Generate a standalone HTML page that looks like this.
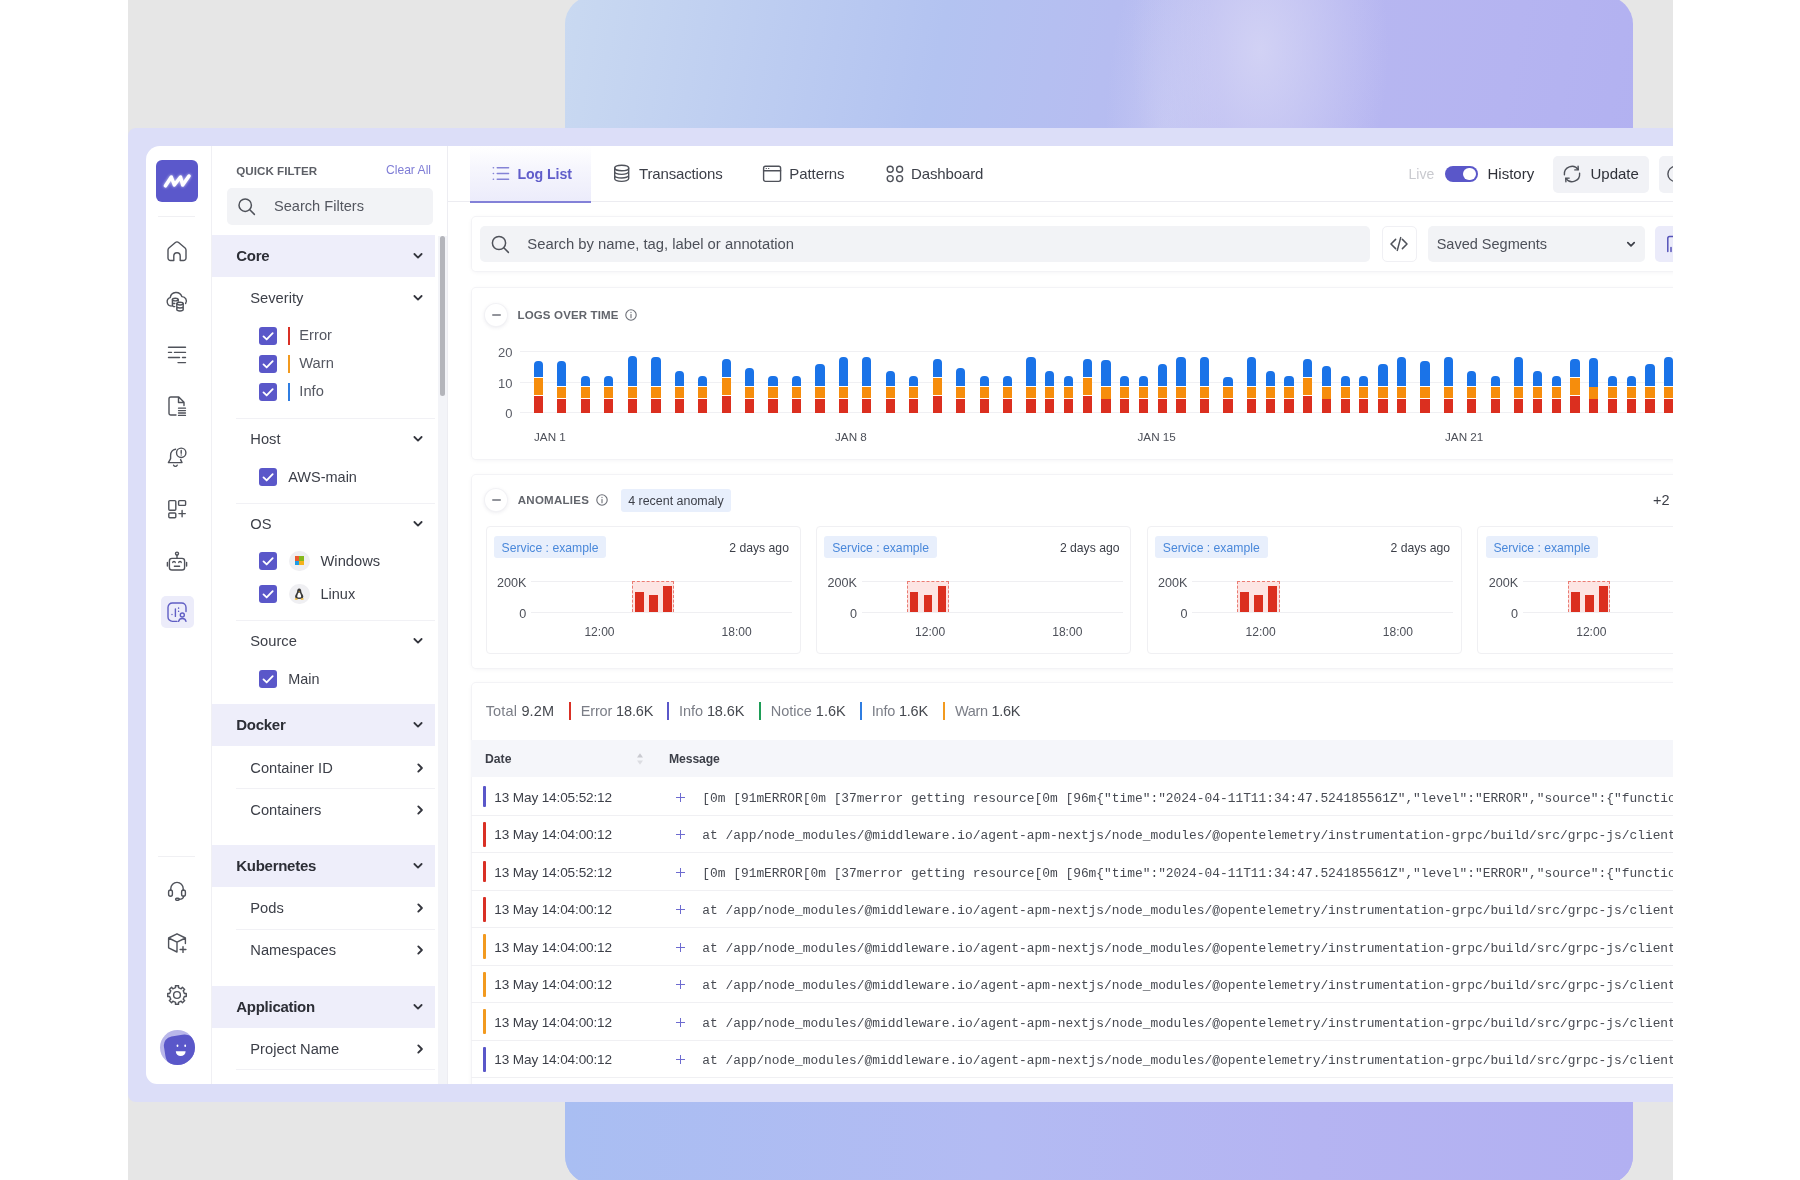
<!DOCTYPE html>
<html lang="en">
<head>
<meta charset="utf-8">
<title>Logs</title>
<style>
*{box-sizing:border-box;margin:0;padding:0}
html,body{width:1800px;height:1180px;overflow:hidden;background:#fff}
body{font-family:"Liberation Sans",sans-serif;color:#3a3d46;position:relative}
#stage{position:absolute;left:128px;top:0;width:1545px;height:1180px;background:#e6e6e6;overflow:hidden}
#grad{position:absolute;left:437px;top:-4px;width:1068px;height:1188px;border-radius:28px;overflow:hidden;
 background:linear-gradient(100deg,#c9d9f1 0%,#b3c3f1 30%,#b8b9f1 52%,#b5b4f1 75%,#afaef1 100%)}
#grad i{position:absolute;display:block}
#frame{position:absolute;left:0;top:128px;width:1600px;height:974px;background:#dcdef8;border-radius:8px 0 0 8px}
#app{position:absolute;left:18px;top:146px;width:1600px;height:938px;background:#fff;border-radius:14px 0 0 11px;overflow:hidden}
#in{position:absolute;left:-146px;top:-146px;width:1800px;height:1180px;will-change:transform}
.t{position:absolute;white-space:nowrap;line-height:1}
.b{position:absolute}
svg{position:absolute;overflow:visible}
.ico{stroke:#4f525a;stroke-width:1.4;fill:none;stroke-linecap:round;stroke-linejoin:round}
.card{position:absolute;background:#fff;border-radius:4px 0 0 4px;box-shadow:0 0 0 1px #f3f3f6,0 1px 5px rgba(30,30,60,.06)}
.cb{position:absolute;width:18.200px;height:18.200px;border-radius:3px;background:#5a57c9}
.cb svg{left:0;top:0}
.sec{position:absolute;left:212px;width:226px;height:42px;background:#eeeefa}
.sec .t{left:24px;top:13px;font-size:15px;font-weight:bold;color:#2c2e36}
.sub{position:absolute;left:250px;font-size:15px;color:#3c3f48;white-space:nowrap;line-height:1}
.opt{position:absolute;font-size:15px;color:#4a4d57;white-space:nowrap;line-height:1}
.hr{position:absolute;left:237px;width:201px;height:1px;background:#ececf1}
.mono{font-family:"Liberation Mono",monospace}
</style>
</head>
<body>
<div id="stage">
 <div id="grad">
  <i style="left:540px;top:-56px;width:120px;height:400px;background:radial-gradient(ellipse at center,rgba(205,208,244,.55),rgba(205,208,244,0) 70%)"></i>
  <i style="left:565px;top:-156px;width:260px;height:420px;background:radial-gradient(ellipse at center,rgba(214,214,245,.85),rgba(214,214,245,0) 70%)"></i>
  <i style="left:0;top:1106px;width:1068px;height:82px;background:linear-gradient(90deg,#a9bef2 0%,#b3bbf3 40%,#b5b4f2 70%,#b2b0f2 100%)"></i>
 </div>
 <div id="frame"></div>
 <div id="app"><div id="in">
<div class="b" style="left:211px;top:146px;width:1px;height:940px;background:#f0f0f4;"></div>
<div class="b" style="left:156px;top:160px;width:42px;height:42px;background:#5b58cb;border-radius:6px;"></div>
<svg class="" style="left:156px;top:160px;filter:drop-shadow(0 0 1.500px rgba(255,255,255,.75))" width="42" height="42" viewBox="0 0 42 42"><path d="M9.500 25.800 L15.300 17 L18.300 25 L24.500 17 L26.700 25 L33 16" stroke="#fff" stroke-width="3.500" fill="none" stroke-linecap="round" stroke-linejoin="round"/></svg>
<div class="b" style="left:158px;top:216px;width:37px;height:1px;background:#f0f0f3;"></div>
<div class="b" style="left:158px;top:856px;width:37px;height:1px;background:#f0f0f3;"></div>
<svg class="ico" style="left:165.3px;top:239.4px;" width="24" height="24" viewBox="0 0 24 24"><path d="M3 11 Q3 9.800 3.900 9 L10.400 3.500 Q12 2.200 13.600 3.500 L20.100 9 Q21 9.800 21 11 V19 a2.500 2.500 0 0 1 -2.500 2.500 H15.200 V17 a3.200 3.200 0 0 0 -6.400 0 V21.500 H5.500 A2.500 2.500 0 0 1 3 19 Z"/></svg>
<svg class="ico" style="left:165.3px;top:289.2px;" width="24" height="24" viewBox="0 0 24 24"><path d="M6.3 17 A4.3 4.3 0 0 1 5.2 8.6 A6 6 0 0 1 16.8 7.6 A4.4 4.4 0 0 1 20.6 14.5"/><ellipse cx="10.3" cy="10.6" rx="2.9" ry="1.3"/><path d="M7.4 10.6 V16.6 M13.2 10.6 V12.2 M7.4 13.2 c0 .8 1.2 1.3 2.4 1.3 M7.4 16.3 c0 .8 1.2 1.3 2.4 1.3"/><ellipse cx="15" cy="14.6" rx="3.2" ry="1.4"/><path d="M11.8 14.6 V20.6 c0 1.9 6.4 1.9 6.4 0 V14.6 M11.8 17.6 c0 1.9 6.4 1.9 6.4 0"/></svg>
<svg class="ico" style="left:165.3px;top:343px;" width="24" height="24" viewBox="0 0 24 24"><path d="M3.5 4.3 H20.5 M3.5 9.4 H6.5 M9.5 9.4 H20.5 M3.5 14.5 H14.5 M17.5 14.5 H20.5 M13 19.6 H20.5"/></svg>
<svg class="ico" style="left:165.3px;top:394px;" width="24" height="24" viewBox="0 0 24 24"><path d="M11 21 H5.8 A1.8 1.8 0 0 1 4 19.2 V4.8 A1.8 1.8 0 0 1 5.8 3 H13.8 L19 8.2 V11.5 M13.5 3.2 V8.5 H18.8"/><path d="M13.5 14.2 H20.5 M13.5 16.6 H20.5 M13.5 19 H20.5 M13.5 21.4 H20.5" stroke-width="1.3"/></svg>
<svg class="ico" style="left:165.3px;top:445.2px;" width="24" height="24" viewBox="0 0 24 24"><path d="M10.600 4.200 A6 6 0 0 0 5.600 10.200 V13.600 L3.400 17.600 H17 L15.600 14.600"/><path d="M8.6 20.2 a2 2 0 0 0 3.6 0"/><circle cx="16.200" cy="7.800" r="4.700"/><path d="M16.200 5.500 V8.200 M16.200 10 V10.100"/></svg>
<svg class="ico" style="left:165.3px;top:496.7px;" width="24" height="24" viewBox="0 0 24 24"><rect x="3.8" y="3.6" width="7" height="9.6" rx="1"/><rect x="13.6" y="3.6" width="7" height="4.8" rx="1"/><rect x="3.8" y="16" width="7" height="4.8" rx="1"/><path d="M17.100 13.400 V19.800 M13.900 16.600 H20.300"/></svg>
<svg class="ico" style="left:165.3px;top:550px;" width="24" height="24" viewBox="0 0 24 24"><rect x="4.4" y="8.4" width="15.2" height="11.6" rx="2.6"/><path d="M12 8.2 V5.2"/><circle cx="12" cy="3.6" r="1.5"/><path d="M2.4 12.4 V16 M21.6 12.4 V16 M9.4 16.2 H14.6 M7.8 12.6 a1.2 1.2 0 0 1 2.4 0 M13.8 12.6 a1.2 1.2 0 0 1 2.4 0"/></svg>
<div class="b" style="left:161px;top:596px;width:32.5px;height:32px;background:#ececfa;border-radius:5px;"></div>
<svg class="ico" style="left:165.3px;top:600px;stroke:#605ec4;" width="24" height="24" viewBox="0 0 24 24"><path d="M12 21.4 H7.4 A4.4 4.4 0 0 1 3 17 V7.4 A4.4 4.4 0 0 1 7.4 3 H16.6 A4.4 4.4 0 0 1 21 7.4 V11.6"/><path d="M7 14.4 V14.6 M10.4 9 V16.4 M13.6 8 V8.2 M13.6 11.2 V11.4"/><circle cx="17.3" cy="15" r="2"/><path d="M13.6 21.4 a3.8 3.8 0 0 1 7.4 0"/></svg>
<svg class="ico" style="left:165.3px;top:878.3px;" width="24" height="24" viewBox="0 0 24 24"><path d="M5.8 12.4 V10.6 A6.2 6.2 0 0 1 18.2 10.600 V12.4"/><rect x="3.6" y="12" width="3.8" height="6.2" rx="1.9"/><rect x="16.6" y="12" width="3.800" height="6.2" rx="1.9"/><path d="M18.6 18.2 c0 2 -1.600 3 -4.600 3"/><rect x="10.600" y="20.200" width="3.600" height="2" rx="1" /></svg>
<svg class="ico" style="left:165.3px;top:931.4px;" width="24" height="24" viewBox="0 0 24 24"><path d="M12 2.800 L20.400 7 L12 11.200 L3.600 7 Z M3.600 7 V16.800 L12 21 V11.200 M20.400 7 V12.600"/><path d="M18 15.600 V21.400 M15.100 18.500 H20.900"/></svg>
<svg class="ico" style="left:165.3px;top:983px;" width="24" height="24" viewBox="0 0 24 24"><path d="M10.41 2.74 L13.59 2.74 L13.44 4.64 L16.19 5.78 L17.43 4.32 L19.68 6.57 L18.22 7.81 L19.36 10.56 L21.26 10.41 L21.26 13.59 L19.36 13.44 L18.22 16.19 L19.68 17.43 L17.43 19.68 L16.19 18.22 L13.44 19.36 L13.59 21.26 L10.41 21.26 L10.56 19.36 L7.81 18.22 L6.57 19.68 L4.32 17.43 L5.78 16.19 L4.64 13.44 L2.74 13.59 L2.74 10.41 L4.64 10.56 L5.78 7.81 L4.32 6.57 L6.57 4.32 L7.81 5.78 L10.56 4.64 Z" stroke-linejoin="round"/><circle cx="12" cy="12" r="3.4"/></svg>
<div class="b" style="left:160px;top:1030px;width:35px;height:35px;border-radius:50%;background:#b9b7ea;overflow:hidden"><div style="position:absolute;left:5px;top:5px;width:34px;height:34px;border-radius:9px 14px 16px 16px;background:#5a57c9;transform:rotate(-9deg)"></div></div>
<svg class="" style="left:160px;top:1030px;" width="35" height="35" viewBox="0 0 35 35"><ellipse cx="17.500" cy="15.800" rx="0.900" ry="1.300" fill="#fff"/><ellipse cx="25.200" cy="15.800" rx="0.900" ry="1.300" fill="#fff"/><path d="M15.800 21.200 H25.600 A4.900 4.900 0 0 1 15.800 21.200 Z" fill="#fff"/></svg>
<div class="b" style="left:447px;top:146px;width:1px;height:940px;background:#ededf2;"></div>
<div class="b" style="left:438px;top:236px;width:9px;height:850px;background:#f3f4f8;"></div>
<div class="b" style="left:440px;top:236px;width:5px;height:160px;background:#b4b5bb;border-radius:2.5px;"></div>
<div class="t" style="left:236.3px;top:164.50px;font-size:11.6px;color:#5c5f66;font-weight:bold;letter-spacing:0.04px;">QUICK FILTER</div>
<div class="t" style="left:386px;top:164.05px;font-size:12.1px;color:#7f7dd6;">Clear All</div>
<div class="b" style="left:227px;top:188px;width:206px;height:37px;background:#f2f3f6;border-radius:5px;"></div>
<svg class="ico" style="left:237px;top:197px;stroke-width:1.5" width="20" height="20" viewBox="0 0 20 20"><circle cx="8.2" cy="8.2" r="6.2"/><path d="M12.800 12.800 L17.400 17.400"/></svg>
<div class="t" style="left:274px;top:199.30px;font-size:14.6px;color:#53565f;">Search Filters</div>
<div class="b" style="left:212px;top:235.3px;width:222.5px;height:41.7px;background:#eeeefa;"></div>
<div class="t" style="left:236.3px;top:248.00px;font-size:15px;color:#2c2e36;font-weight:bold;letter-spacing:-0.28px;">Core</div>
<svg class="ico" style="left:412.3px;top:252.15000000000003px;stroke:#33353d;stroke-width:1.800" width="12" height="8" viewBox="0 0 12 8"><path d="M2.400 2 L6 5.600 L9.600 2"/></svg>
<div class="t" style="left:250.3px;top:290.95px;font-size:14.7px;color:#3c3f48;">Severity</div>
<svg class="ico" style="left:412.3px;top:293.8px;stroke:#33353d;stroke-width:1.800" width="12" height="8" viewBox="0 0 12 8"><path d="M2.400 2 L6 5.600 L9.600 2"/></svg>
<div class="cb" style="left:259.3px;top:327.0px"><svg width="18.200" height="18.200" viewBox="0 0 19 19"><path d="M4.700 9.800 L8 13 L14.300 6.400" stroke="#fff" stroke-width="1.900" fill="none" stroke-linecap="round" stroke-linejoin="round"/></svg></div>
<div class="b" style="left:287.6px;top:326.8px;width:2px;height:18.5px;background:#d93025;"></div>
<div class="t" style="left:299.3px;top:328.35px;font-size:14.7px;color:#555862;">Error</div>
<div class="cb" style="left:259.3px;top:355.0px"><svg width="18.200" height="18.200" viewBox="0 0 19 19"><path d="M4.700 9.800 L8 13 L14.300 6.400" stroke="#fff" stroke-width="1.900" fill="none" stroke-linecap="round" stroke-linejoin="round"/></svg></div>
<div class="b" style="left:287.6px;top:354.8px;width:2px;height:18.5px;background:#f29a1f;"></div>
<div class="t" style="left:299.3px;top:356.35px;font-size:14.7px;color:#555862;">Warn</div>
<div class="cb" style="left:259.3px;top:383.0px"><svg width="18.200" height="18.200" viewBox="0 0 19 19"><path d="M4.700 9.800 L8 13 L14.300 6.400" stroke="#fff" stroke-width="1.900" fill="none" stroke-linecap="round" stroke-linejoin="round"/></svg></div>
<div class="b" style="left:287.6px;top:382.8px;width:2px;height:18.5px;background:#2f7de1;"></div>
<div class="t" style="left:299.3px;top:384.35px;font-size:14.7px;color:#555862;">Info</div>
<div class="b" style="left:236px;top:418px;width:198.5px;height:1px;background:#f1f1f5;"></div>
<div class="t" style="left:250.3px;top:432.15px;font-size:14.7px;color:#3c3f48;">Host</div>
<svg class="ico" style="left:412.3px;top:435px;stroke:#33353d;stroke-width:1.800" width="12" height="8" viewBox="0 0 12 8"><path d="M2.400 2 L6 5.600 L9.600 2"/></svg>
<div class="cb" style="left:259.3px;top:467.59999999999997px"><svg width="18.200" height="18.200" viewBox="0 0 19 19"><path d="M4.700 9.800 L8 13 L14.300 6.400" stroke="#fff" stroke-width="1.900" fill="none" stroke-linecap="round" stroke-linejoin="round"/></svg></div>
<div class="t" style="left:288.2px;top:469.55px;font-size:14.5px;color:#3c3f48;">AWS-main</div>
<div class="b" style="left:236px;top:502.5px;width:198.5px;height:1px;background:#f1f1f5;"></div>
<div class="t" style="left:250.3px;top:516.65px;font-size:14.7px;color:#3c3f48;">OS</div>
<svg class="ico" style="left:412.3px;top:519.5px;stroke:#33353d;stroke-width:1.800" width="12" height="8" viewBox="0 0 12 8"><path d="M2.400 2 L6 5.600 L9.600 2"/></svg>
<div class="cb" style="left:259.3px;top:552.2px"><svg width="18.200" height="18.200" viewBox="0 0 19 19"><path d="M4.700 9.800 L8 13 L14.300 6.400" stroke="#fff" stroke-width="1.900" fill="none" stroke-linecap="round" stroke-linejoin="round"/></svg></div>
<div class="t" style="left:320.5px;top:554.25px;font-size:14.7px;color:#3c3f48;">Windows</div>
<div class="cb" style="left:259.3px;top:585.0px"><svg width="18.200" height="18.200" viewBox="0 0 19 19"><path d="M4.700 9.800 L8 13 L14.300 6.400" stroke="#fff" stroke-width="1.900" fill="none" stroke-linecap="round" stroke-linejoin="round"/></svg></div>
<div class="t" style="left:320.5px;top:587.15px;font-size:14.5px;color:#3c3f48;">Linux</div>
<div class="b" style="left:289px;top:550.5px;width:20.5px;height:20.5px;background:#efeff2;border-radius:11px;"></div>
<div class="b" style="left:294.6px;top:556.2px;width:4.6px;height:4.6px;background:#ea5a2e;"></div>
<div class="b" style="left:299.2px;top:556.2px;width:4.6px;height:4.6px;background:#86b81c;"></div>
<div class="b" style="left:294.6px;top:560.8px;width:4.6px;height:4.6px;background:#1e9de6;"></div>
<div class="b" style="left:299.2px;top:560.8px;width:4.6px;height:4.6px;background:#f5b21a;"></div>
<div class="b" style="left:289px;top:583.5px;width:20.5px;height:20.5px;background:#efeff2;border-radius:11px;"></div>
<svg class="" style="left:289px;top:583.5px;" width="20.5" height="20.5" viewBox="0 0 20.5 20.5"><path d="M10.200 4.600 c1.600 0 2 1.400 2.100 2.800 c.1 1.600 2 3 2 5.200 c0 1.400 -1 2.400 -4.100 2.400 s-4.100 -1 -4.100 -2.400 c0 -2.200 1.900 -3.600 2 -5.200 c.1 -1.400 .5 -2.800 2.100 -2.800 Z" fill="#3a3a3a" stroke="none"/><path d="M10.200 8.400 c1 0 1.400 1.600 1.800 3 c.3 1 .4 2.200 -1.800 2.200 s-2.100 -1.200 -1.800 -2.200 c.4 -1.400 .8 -3 1.800 -3 Z" fill="#fff" stroke="none"/><path d="M6 14.200 l2.400 .3 l.2 1.300 l-2.800 -.2 Z M14.400 14.200 l-2.400 .3 l-.2 1.300 l2.800 -.2 Z M9.400 7.600 l.8 .6 l.8 -.6 l-.8 -.4 Z" fill="#f2b21c" stroke="none"/></svg>
<div class="b" style="left:236px;top:620px;width:198.5px;height:1px;background:#f1f1f5;"></div>
<div class="t" style="left:250.3px;top:633.65px;font-size:14.7px;color:#3c3f48;">Source</div>
<svg class="ico" style="left:412.3px;top:636.5px;stroke:#33353d;stroke-width:1.800" width="12" height="8" viewBox="0 0 12 8"><path d="M2.400 2 L6 5.600 L9.600 2"/></svg>
<div class="cb" style="left:259.3px;top:669.6px"><svg width="18.200" height="18.200" viewBox="0 0 19 19"><path d="M4.700 9.800 L8 13 L14.300 6.400" stroke="#fff" stroke-width="1.900" fill="none" stroke-linecap="round" stroke-linejoin="round"/></svg></div>
<div class="t" style="left:288.2px;top:671.60px;font-size:14.4px;color:#3c3f48;">Main</div>
<div class="b" style="left:212px;top:704px;width:222.5px;height:41.7px;background:#eeeefa;"></div>
<div class="t" style="left:236.3px;top:716.70px;font-size:15px;color:#2c2e36;font-weight:bold;letter-spacing:-0.28px;">Docker</div>
<svg class="ico" style="left:412.3px;top:720.85px;stroke:#33353d;stroke-width:1.800" width="12" height="8" viewBox="0 0 12 8"><path d="M2.400 2 L6 5.600 L9.600 2"/></svg>
<div class="t" style="left:250.3px;top:760.65px;font-size:14.7px;color:#3c3f48;">Container ID</div>
<svg class="ico" style="left:416.2px;top:761.5px;stroke:#33353d;stroke-width:1.900" width="8" height="12" viewBox="0 0 8 12"><path d="M2.300 2.400 L5.900 6 L2.300 9.600"/></svg>
<div class="b" style="left:236px;top:787.8px;width:198.5px;height:1px;background:#f1f1f5;"></div>
<div class="t" style="left:250.3px;top:802.65px;font-size:14.7px;color:#3c3f48;">Containers</div>
<svg class="ico" style="left:416.2px;top:803.5px;stroke:#33353d;stroke-width:1.900" width="8" height="12" viewBox="0 0 8 12"><path d="M2.300 2.400 L5.900 6 L2.300 9.600"/></svg>
<div class="b" style="left:212px;top:845px;width:222.5px;height:41.7px;background:#eeeefa;"></div>
<div class="t" style="left:236.3px;top:857.70px;font-size:15px;color:#2c2e36;font-weight:bold;letter-spacing:-0.28px;">Kubernetes</div>
<svg class="ico" style="left:412.3px;top:861.85px;stroke:#33353d;stroke-width:1.800" width="12" height="8" viewBox="0 0 12 8"><path d="M2.400 2 L6 5.600 L9.600 2"/></svg>
<div class="t" style="left:250.3px;top:901.15px;font-size:14.7px;color:#3c3f48;">Pods</div>
<svg class="ico" style="left:416.2px;top:902px;stroke:#33353d;stroke-width:1.900" width="8" height="12" viewBox="0 0 8 12"><path d="M2.300 2.400 L5.900 6 L2.300 9.600"/></svg>
<div class="b" style="left:236px;top:929px;width:198.5px;height:1px;background:#f1f1f5;"></div>
<div class="t" style="left:250.3px;top:943.15px;font-size:14.7px;color:#3c3f48;">Namespaces</div>
<svg class="ico" style="left:416.2px;top:944px;stroke:#33353d;stroke-width:1.900" width="8" height="12" viewBox="0 0 8 12"><path d="M2.300 2.400 L5.900 6 L2.300 9.600"/></svg>
<div class="b" style="left:212px;top:986px;width:222.5px;height:41.7px;background:#eeeefa;"></div>
<div class="t" style="left:236.3px;top:998.70px;font-size:15px;color:#2c2e36;font-weight:bold;letter-spacing:-0.28px;">Application</div>
<svg class="ico" style="left:412.3px;top:1002.85px;stroke:#33353d;stroke-width:1.800" width="12" height="8" viewBox="0 0 12 8"><path d="M2.400 2 L6 5.600 L9.600 2"/></svg>
<div class="t" style="left:250.3px;top:1041.65px;font-size:14.7px;color:#3c3f48;">Project Name</div>
<svg class="ico" style="left:416.2px;top:1042.5px;stroke:#33353d;stroke-width:1.900" width="8" height="12" viewBox="0 0 8 12"><path d="M2.300 2.400 L5.900 6 L2.300 9.600"/></svg>
<div class="b" style="left:236px;top:1069.2px;width:198.5px;height:1px;background:#f1f1f5;"></div>
<div class="b" style="left:448px;top:201px;width:1300px;height:1px;background:#ececf1;"></div>
<div class="b" style="left:470px;top:146px;width:121px;height:56.500px;background:linear-gradient(180deg,#fff 0%,#f6f6fd 40%,#ececfb 100%);border-bottom:2px solid #8381d8"></div>
<svg class="ico" style="left:490px;top:163px;" width="20" height="20" viewBox="0 0 20 20"><path d="M7.200 4.800 H18.600 M7.200 10.500 H18.600 M7.200 16.200 H18.600" stroke="#8583d6" stroke-width="1.400"/><path d="M3.300 4.800 H3.500 M3.300 10.500 H3.500 M3.300 16.200 H3.500" stroke="#8583d6" stroke-width="1.500"/></svg>
<div class="t" style="left:517.5px;top:167.00px;font-size:14.2px;color:#605dca;font-weight:bold;letter-spacing:-0.11px;">Log List</div>
<svg class="ico" style="left:612px;top:163px;" width="20" height="20" viewBox="0 0 20 20"><ellipse cx="9.700" cy="5" rx="7" ry="2.800"/><path d="M2.700 5 V15.600 c0 3.700 14 3.700 14 0 V5 M2.700 8.600 c0 3.700 14 3.700 14 0 M2.700 12.200 c0 3.700 14 3.700 14 0"/></svg>
<div class="t" style="left:639px;top:165.80px;font-size:15px;color:#3c3f48;letter-spacing:-0.15px;">Transactions</div>
<svg class="ico" style="left:762px;top:164px;" width="20" height="20" viewBox="0 0 20 20"><rect x="1.600" y="2.200" width="17" height="15.200" rx="1.800"/><path d="M1.600 6.800 H18.600"/><path d="M4.200 4.500 H4.400 M6.600 4.500 H6.800" stroke-width="1.200"/></svg>
<div class="t" style="left:789.3px;top:165.80px;font-size:15px;color:#3c3f48;letter-spacing:-0.08px;">Patterns</div>
<svg class="ico" style="left:885px;top:164px;" width="20" height="20" viewBox="0 0 20 20"><circle cx="5.200" cy="5.200" r="3"/><circle cx="14.600" cy="5.200" r="3"/><circle cx="5.200" cy="14.600" r="3"/><circle cx="14.600" cy="14.600" r="3"/></svg>
<div class="t" style="left:911px;top:165.80px;font-size:15px;color:#3c3f48;letter-spacing:-0.13px;">Dashboard</div>
<div class="t" style="left:1408.5px;top:166.50px;font-size:14px;color:#c9cacf;">Live</div>
<div class="b" style="left:1444.5px;top:165.5px;width:33.5px;height:16.5px;background:#5a57c9;border-radius:8.5px;"></div>
<div class="b" style="left:1463px;top:167.5px;width:12.5px;height:12.5px;background:#fff;border-radius:6.5px;"></div>
<div class="t" style="left:1487.5px;top:166.00px;font-size:15px;color:#2f3139;">History</div>
<div class="b" style="left:1553px;top:155.5px;width:95.5px;height:37px;background:#f1f2f6;border-radius:5px;"></div>
<svg class="ico" style="left:1561.5px;top:164px;" width="20" height="20" viewBox="0 0 20 20"><path d="M2.400 10.700 A7.600 7.600 0 0 1 16.200 5.600 M17.600 9.300 A7.600 7.600 0 0 1 3.800 14.400"/><path d="M12.800 5.900 L16.300 5.700 L16.100 2.200 M7.200 14.100 L3.700 14.300 L3.900 17.800"/></svg>
<div class="t" style="left:1590.5px;top:166.00px;font-size:15px;color:#2f3139;">Update</div>
<div class="b" style="left:1658.5px;top:155.5px;width:40px;height:37px;background:#f1f2f6;border-radius:5px;"></div>
<svg class="ico" style="left:1666px;top:164px;" width="20" height="20" viewBox="0 0 20 20"><circle cx="9.500" cy="10" r="7.600"/></svg>
<div class="card" style="left:471.500px;top:217px;width:1300px;height:54px"></div>
<div class="b" style="left:480px;top:226px;width:890px;height:36px;background:#f2f3f6;border-radius:5px;"></div>
<svg class="ico" style="left:490px;top:234px;stroke-width:1.500" width="20" height="20" viewBox="0 0 20 20"><circle cx="9" cy="9" r="6.600"/><path d="M13.800 13.800 L18.400 18.400"/></svg>
<div class="t" style="left:527.3px;top:236.89px;font-size:14.82px;color:#4d5059;">Search by name, tag, label or annotation</div>
<div class="b" style="left:1381.5px;top:226px;width:35.5px;height:36px;border:1px solid #f0f0f4;border-radius:5px;background:#fff"></div>
<svg class="ico" style="left:1389px;top:234px;stroke-width:1.500" width="20" height="20" viewBox="0 0 20 20"><path d="M6.600 5.400 L2 10 L6.600 14.600 M13.400 5.400 L18 10 L13.400 14.600 M11.700 3.600 L8.300 16.400"/></svg>
<div class="b" style="left:1427.5px;top:226px;width:217.5px;height:36px;background:#f2f3f6;border-radius:5px;"></div>
<div class="t" style="left:1436.7px;top:237.05px;font-size:14.5px;color:#4d5059;">Saved Segments</div>
<svg class="ico" style="left:1626px;top:241.3px;stroke:#3c3f48;stroke-width:1.700" width="10" height="7" viewBox="0 0 10 7"><path d="M1.800 1.700 L5 4.900 L8.200 1.700"/></svg>
<div class="b" style="left:1655px;top:226px;width:40px;height:36px;background:#ebebfa;border-radius:5px;"></div>
<svg class="ico" style="left:1664px;top:234px;stroke:#5552b8;stroke-width:1.500" width="20" height="20" viewBox="0 0 20 20"><path d="M3.800 17.400 V4.400 A1.800 1.800 0 0 1 5.600 2.600 H14 M7 17.400 V13.600"/></svg>
<div class="card" style="left:471.500px;top:288px;width:1300px;height:171px"></div>
<div class="b" style="left:485px;top:303.5px;width:22px;height:22px;border-radius:50%;background:#fff;box-shadow:0 0 0 1px #f2f2f5,0 1px 4px rgba(40,40,80,.13)"></div>
<div class="b" style="left:491.5px;top:314px;width:9px;height:2px;background:#92949b;border-radius:1px;"></div>
<div class="t" style="left:517.5px;top:309.75px;font-size:11.5px;color:#62656c;font-weight:bold;letter-spacing:0.15px;">LOGS OVER TIME</div>
<svg class="ico" style="left:625px;top:308.5px;stroke:#6b6e76;stroke-width:1.100" width="12" height="12" viewBox="0 0 12 12"><circle cx="6" cy="6" r="5.200"/><path d="M6 5.400 V8.700 M6 3.300 V3.400"/></svg>
<div class="b" style="left:520px;top:351.3px;width:1300px;height:1px;background:#f0f0f3;"></div>
<div class="t" style="left:462px;width:50.500px;text-align:right;top:346.3px;font-size:13px;color:#5a5d66">20</div>
<div class="b" style="left:520px;top:381.8px;width:1300px;height:1px;background:#f0f0f3;"></div>
<div class="t" style="left:462px;width:50.500px;text-align:right;top:376.8px;font-size:13px;color:#5a5d66">10</div>
<div class="b" style="left:520px;top:412.3px;width:1300px;height:1px;background:#f0f0f3;"></div>
<div class="t" style="left:462px;width:50.500px;text-align:right;top:407.3px;font-size:13px;color:#5a5d66">0</div>
<div class="b" style="left:533.7px;top:361.3px;width:9.3px;height:15.3px;background:#1a73e8;border-radius:4px 4px 0 0"></div>
<div class="b" style="left:533.7px;top:378.3px;width:9.3px;height:16.3px;background:#f68d0c"></div>
<div class="b" style="left:533.7px;top:396.3px;width:9.3px;height:16.5px;background:#db2f1f"></div>
<div class="b" style="left:557.0px;top:361.3px;width:9.3px;height:24.5px;background:#1a73e8;border-radius:4px 4px 0 0"></div>
<div class="b" style="left:557.0px;top:387.2px;width:9.3px;height:10.7px;background:#f68d0c"></div>
<div class="b" style="left:557.0px;top:399.2px;width:9.3px;height:13.6px;background:#db2f1f"></div>
<div class="b" style="left:580.8px;top:375.5px;width:9.3px;height:10.3px;background:#1a73e8;border-radius:4px 4px 0 0"></div>
<div class="b" style="left:580.8px;top:387.2px;width:9.3px;height:10.7px;background:#f68d0c"></div>
<div class="b" style="left:580.8px;top:399.2px;width:9.3px;height:13.6px;background:#db2f1f"></div>
<div class="b" style="left:604.2px;top:375.5px;width:9.3px;height:10.3px;background:#1a73e8;border-radius:4px 4px 0 0"></div>
<div class="b" style="left:604.2px;top:387.2px;width:9.3px;height:10.7px;background:#f68d0c"></div>
<div class="b" style="left:604.2px;top:399.2px;width:9.3px;height:13.6px;background:#db2f1f"></div>
<div class="b" style="left:627.7px;top:355.5px;width:9.3px;height:30.3px;background:#1a73e8;border-radius:4px 4px 0 0"></div>
<div class="b" style="left:627.7px;top:387.2px;width:9.3px;height:10.7px;background:#f68d0c"></div>
<div class="b" style="left:627.7px;top:399.2px;width:9.3px;height:13.6px;background:#db2f1f"></div>
<div class="b" style="left:651.3px;top:356.7px;width:9.3px;height:29.2px;background:#1a73e8;border-radius:4px 4px 0 0"></div>
<div class="b" style="left:651.3px;top:387.2px;width:9.3px;height:10.7px;background:#f68d0c"></div>
<div class="b" style="left:651.3px;top:399.2px;width:9.3px;height:13.6px;background:#db2f1f"></div>
<div class="b" style="left:674.7px;top:370.8px;width:9.3px;height:15.0px;background:#1a73e8;border-radius:4px 4px 0 0"></div>
<div class="b" style="left:674.7px;top:387.2px;width:9.3px;height:10.7px;background:#f68d0c"></div>
<div class="b" style="left:674.7px;top:399.2px;width:9.3px;height:13.6px;background:#db2f1f"></div>
<div class="b" style="left:698.0px;top:375.5px;width:9.3px;height:10.3px;background:#1a73e8;border-radius:4px 4px 0 0"></div>
<div class="b" style="left:698.0px;top:387.2px;width:9.3px;height:10.7px;background:#f68d0c"></div>
<div class="b" style="left:698.0px;top:399.2px;width:9.3px;height:13.6px;background:#db2f1f"></div>
<div class="b" style="left:721.7px;top:359.2px;width:9.3px;height:17.5px;background:#1a73e8;border-radius:4px 4px 0 0"></div>
<div class="b" style="left:721.7px;top:378.3px;width:9.3px;height:16.3px;background:#f68d0c"></div>
<div class="b" style="left:721.7px;top:396.3px;width:9.3px;height:16.5px;background:#db2f1f"></div>
<div class="b" style="left:745.0px;top:368.3px;width:9.3px;height:17.5px;background:#1a73e8;border-radius:4px 4px 0 0"></div>
<div class="b" style="left:745.0px;top:387.2px;width:9.3px;height:10.7px;background:#f68d0c"></div>
<div class="b" style="left:745.0px;top:399.2px;width:9.3px;height:13.6px;background:#db2f1f"></div>
<div class="b" style="left:768.3px;top:375.5px;width:9.3px;height:10.3px;background:#1a73e8;border-radius:4px 4px 0 0"></div>
<div class="b" style="left:768.3px;top:387.2px;width:9.3px;height:10.7px;background:#f68d0c"></div>
<div class="b" style="left:768.3px;top:399.2px;width:9.3px;height:13.6px;background:#db2f1f"></div>
<div class="b" style="left:792.0px;top:375.5px;width:9.3px;height:10.3px;background:#1a73e8;border-radius:4px 4px 0 0"></div>
<div class="b" style="left:792.0px;top:387.2px;width:9.3px;height:10.7px;background:#f68d0c"></div>
<div class="b" style="left:792.0px;top:399.2px;width:9.3px;height:13.6px;background:#db2f1f"></div>
<div class="b" style="left:815.3px;top:363.8px;width:9.3px;height:22.0px;background:#1a73e8;border-radius:4px 4px 0 0"></div>
<div class="b" style="left:815.3px;top:387.2px;width:9.3px;height:10.7px;background:#f68d0c"></div>
<div class="b" style="left:815.3px;top:399.2px;width:9.3px;height:13.6px;background:#db2f1f"></div>
<div class="b" style="left:838.7px;top:356.7px;width:9.3px;height:29.2px;background:#1a73e8;border-radius:4px 4px 0 0"></div>
<div class="b" style="left:838.7px;top:387.2px;width:9.3px;height:10.7px;background:#f68d0c"></div>
<div class="b" style="left:838.7px;top:399.2px;width:9.3px;height:13.6px;background:#db2f1f"></div>
<div class="b" style="left:862.0px;top:356.7px;width:9.3px;height:29.2px;background:#1a73e8;border-radius:4px 4px 0 0"></div>
<div class="b" style="left:862.0px;top:387.2px;width:9.3px;height:10.7px;background:#f68d0c"></div>
<div class="b" style="left:862.0px;top:399.2px;width:9.3px;height:13.6px;background:#db2f1f"></div>
<div class="b" style="left:885.5px;top:370.8px;width:9.3px;height:15.0px;background:#1a73e8;border-radius:4px 4px 0 0"></div>
<div class="b" style="left:885.5px;top:387.2px;width:9.3px;height:10.7px;background:#f68d0c"></div>
<div class="b" style="left:885.5px;top:399.2px;width:9.3px;height:13.6px;background:#db2f1f"></div>
<div class="b" style="left:909.0px;top:375.5px;width:9.3px;height:10.3px;background:#1a73e8;border-radius:4px 4px 0 0"></div>
<div class="b" style="left:909.0px;top:387.2px;width:9.3px;height:10.7px;background:#f68d0c"></div>
<div class="b" style="left:909.0px;top:399.2px;width:9.3px;height:13.6px;background:#db2f1f"></div>
<div class="b" style="left:932.5px;top:359.2px;width:9.3px;height:17.5px;background:#1a73e8;border-radius:4px 4px 0 0"></div>
<div class="b" style="left:932.5px;top:378.3px;width:9.3px;height:16.3px;background:#f68d0c"></div>
<div class="b" style="left:932.5px;top:396.3px;width:9.3px;height:16.5px;background:#db2f1f"></div>
<div class="b" style="left:956.0px;top:368.3px;width:9.3px;height:17.5px;background:#1a73e8;border-radius:4px 4px 0 0"></div>
<div class="b" style="left:956.0px;top:387.2px;width:9.3px;height:10.7px;background:#f68d0c"></div>
<div class="b" style="left:956.0px;top:399.2px;width:9.3px;height:13.6px;background:#db2f1f"></div>
<div class="b" style="left:979.5px;top:375.5px;width:9.3px;height:10.3px;background:#1a73e8;border-radius:4px 4px 0 0"></div>
<div class="b" style="left:979.5px;top:387.2px;width:9.3px;height:10.7px;background:#f68d0c"></div>
<div class="b" style="left:979.5px;top:399.2px;width:9.3px;height:13.6px;background:#db2f1f"></div>
<div class="b" style="left:1002.8px;top:375.5px;width:9.3px;height:10.3px;background:#1a73e8;border-radius:4px 4px 0 0"></div>
<div class="b" style="left:1002.8px;top:387.2px;width:9.3px;height:10.7px;background:#f68d0c"></div>
<div class="b" style="left:1002.8px;top:399.2px;width:9.3px;height:13.6px;background:#db2f1f"></div>
<div class="b" style="left:1026.3px;top:356.7px;width:9.3px;height:29.2px;background:#1a73e8;border-radius:4px 4px 0 0"></div>
<div class="b" style="left:1026.3px;top:387.2px;width:9.3px;height:10.7px;background:#f68d0c"></div>
<div class="b" style="left:1026.3px;top:399.2px;width:9.3px;height:13.6px;background:#db2f1f"></div>
<div class="b" style="left:1045.0px;top:370.8px;width:9.3px;height:15.0px;background:#1a73e8;border-radius:4px 4px 0 0"></div>
<div class="b" style="left:1045.0px;top:387.2px;width:9.3px;height:10.7px;background:#f68d0c"></div>
<div class="b" style="left:1045.0px;top:399.2px;width:9.3px;height:13.6px;background:#db2f1f"></div>
<div class="b" style="left:1063.8px;top:375.5px;width:9.3px;height:10.3px;background:#1a73e8;border-radius:4px 4px 0 0"></div>
<div class="b" style="left:1063.8px;top:387.2px;width:9.3px;height:10.7px;background:#f68d0c"></div>
<div class="b" style="left:1063.8px;top:399.2px;width:9.3px;height:13.6px;background:#db2f1f"></div>
<div class="b" style="left:1082.5px;top:359.2px;width:9.3px;height:17.5px;background:#1a73e8;border-radius:4px 4px 0 0"></div>
<div class="b" style="left:1082.5px;top:378.3px;width:9.3px;height:16.3px;background:#f68d0c"></div>
<div class="b" style="left:1082.5px;top:396.3px;width:9.3px;height:16.5px;background:#db2f1f"></div>
<div class="b" style="left:1101.3px;top:360.3px;width:9.3px;height:26.2px;background:#1a73e8;border-radius:4px 4px 0 0"></div>
<div class="b" style="left:1101.3px;top:386.5px;width:9.3px;height:12.0px;background:#f68d0c"></div>
<div class="b" style="left:1101.3px;top:398.5px;width:9.3px;height:14.3px;background:#db2f1f"></div>
<div class="b" style="left:1120.0px;top:375.5px;width:9.3px;height:10.3px;background:#1a73e8;border-radius:4px 4px 0 0"></div>
<div class="b" style="left:1120.0px;top:387.2px;width:9.3px;height:10.7px;background:#f68d0c"></div>
<div class="b" style="left:1120.0px;top:399.2px;width:9.3px;height:13.6px;background:#db2f1f"></div>
<div class="b" style="left:1138.8px;top:375.5px;width:9.3px;height:10.3px;background:#1a73e8;border-radius:4px 4px 0 0"></div>
<div class="b" style="left:1138.8px;top:387.2px;width:9.3px;height:10.7px;background:#f68d0c"></div>
<div class="b" style="left:1138.8px;top:399.2px;width:9.3px;height:13.6px;background:#db2f1f"></div>
<div class="b" style="left:1157.5px;top:363.8px;width:9.3px;height:22.0px;background:#1a73e8;border-radius:4px 4px 0 0"></div>
<div class="b" style="left:1157.5px;top:387.2px;width:9.3px;height:10.7px;background:#f68d0c"></div>
<div class="b" style="left:1157.5px;top:399.2px;width:9.3px;height:13.6px;background:#db2f1f"></div>
<div class="b" style="left:1176.3px;top:356.7px;width:9.3px;height:29.2px;background:#1a73e8;border-radius:4px 4px 0 0"></div>
<div class="b" style="left:1176.3px;top:387.2px;width:9.3px;height:10.7px;background:#f68d0c"></div>
<div class="b" style="left:1176.3px;top:399.2px;width:9.3px;height:13.6px;background:#db2f1f"></div>
<div class="b" style="left:1200.0px;top:356.7px;width:9.3px;height:29.2px;background:#1a73e8;border-radius:4px 4px 0 0"></div>
<div class="b" style="left:1200.0px;top:387.2px;width:9.3px;height:10.7px;background:#f68d0c"></div>
<div class="b" style="left:1200.0px;top:399.2px;width:9.3px;height:13.6px;background:#db2f1f"></div>
<div class="b" style="left:1223.3px;top:376.7px;width:9.3px;height:9.2px;background:#1a73e8;border-radius:4px 4px 0 0"></div>
<div class="b" style="left:1223.3px;top:387.2px;width:9.3px;height:10.7px;background:#f68d0c"></div>
<div class="b" style="left:1223.3px;top:399.2px;width:9.3px;height:13.6px;background:#db2f1f"></div>
<div class="b" style="left:1247.0px;top:356.7px;width:9.3px;height:29.2px;background:#1a73e8;border-radius:4px 4px 0 0"></div>
<div class="b" style="left:1247.0px;top:387.2px;width:9.3px;height:10.7px;background:#f68d0c"></div>
<div class="b" style="left:1247.0px;top:399.2px;width:9.3px;height:13.6px;background:#db2f1f"></div>
<div class="b" style="left:1265.5px;top:370.8px;width:9.3px;height:15.0px;background:#1a73e8;border-radius:4px 4px 0 0"></div>
<div class="b" style="left:1265.5px;top:387.2px;width:9.3px;height:10.7px;background:#f68d0c"></div>
<div class="b" style="left:1265.5px;top:399.2px;width:9.3px;height:13.6px;background:#db2f1f"></div>
<div class="b" style="left:1284.3px;top:375.5px;width:9.3px;height:10.3px;background:#1a73e8;border-radius:4px 4px 0 0"></div>
<div class="b" style="left:1284.3px;top:387.2px;width:9.3px;height:10.7px;background:#f68d0c"></div>
<div class="b" style="left:1284.3px;top:399.2px;width:9.3px;height:13.6px;background:#db2f1f"></div>
<div class="b" style="left:1303.0px;top:359.2px;width:9.3px;height:17.5px;background:#1a73e8;border-radius:4px 4px 0 0"></div>
<div class="b" style="left:1303.0px;top:378.3px;width:9.3px;height:16.3px;background:#f68d0c"></div>
<div class="b" style="left:1303.0px;top:396.3px;width:9.3px;height:16.5px;background:#db2f1f"></div>
<div class="b" style="left:1321.7px;top:366.3px;width:9.3px;height:20.2px;background:#1a73e8;border-radius:4px 4px 0 0"></div>
<div class="b" style="left:1321.7px;top:386.5px;width:9.3px;height:12.0px;background:#f68d0c"></div>
<div class="b" style="left:1321.7px;top:398.5px;width:9.3px;height:14.3px;background:#db2f1f"></div>
<div class="b" style="left:1340.5px;top:375.5px;width:9.3px;height:10.3px;background:#1a73e8;border-radius:4px 4px 0 0"></div>
<div class="b" style="left:1340.5px;top:387.2px;width:9.3px;height:10.7px;background:#f68d0c"></div>
<div class="b" style="left:1340.5px;top:399.2px;width:9.3px;height:13.6px;background:#db2f1f"></div>
<div class="b" style="left:1359.2px;top:375.5px;width:9.3px;height:10.3px;background:#1a73e8;border-radius:4px 4px 0 0"></div>
<div class="b" style="left:1359.2px;top:387.2px;width:9.3px;height:10.7px;background:#f68d0c"></div>
<div class="b" style="left:1359.2px;top:399.2px;width:9.3px;height:13.6px;background:#db2f1f"></div>
<div class="b" style="left:1378.3px;top:363.8px;width:9.3px;height:22.0px;background:#1a73e8;border-radius:4px 4px 0 0"></div>
<div class="b" style="left:1378.3px;top:387.2px;width:9.3px;height:10.7px;background:#f68d0c"></div>
<div class="b" style="left:1378.3px;top:399.2px;width:9.3px;height:13.6px;background:#db2f1f"></div>
<div class="b" style="left:1397.0px;top:356.7px;width:9.3px;height:29.2px;background:#1a73e8;border-radius:4px 4px 0 0"></div>
<div class="b" style="left:1397.0px;top:387.2px;width:9.3px;height:10.7px;background:#f68d0c"></div>
<div class="b" style="left:1397.0px;top:399.2px;width:9.3px;height:13.6px;background:#db2f1f"></div>
<div class="b" style="left:1420.3px;top:361.3px;width:9.3px;height:24.5px;background:#1a73e8;border-radius:4px 4px 0 0"></div>
<div class="b" style="left:1420.3px;top:387.2px;width:9.3px;height:10.7px;background:#f68d0c"></div>
<div class="b" style="left:1420.3px;top:399.2px;width:9.3px;height:13.6px;background:#db2f1f"></div>
<div class="b" style="left:1443.8px;top:356.7px;width:9.3px;height:29.2px;background:#1a73e8;border-radius:4px 4px 0 0"></div>
<div class="b" style="left:1443.8px;top:387.2px;width:9.3px;height:10.7px;background:#f68d0c"></div>
<div class="b" style="left:1443.8px;top:399.2px;width:9.3px;height:13.6px;background:#db2f1f"></div>
<div class="b" style="left:1467.2px;top:370.8px;width:9.3px;height:15.0px;background:#1a73e8;border-radius:4px 4px 0 0"></div>
<div class="b" style="left:1467.2px;top:387.2px;width:9.3px;height:10.7px;background:#f68d0c"></div>
<div class="b" style="left:1467.2px;top:399.2px;width:9.3px;height:13.6px;background:#db2f1f"></div>
<div class="b" style="left:1490.7px;top:375.5px;width:9.3px;height:10.3px;background:#1a73e8;border-radius:4px 4px 0 0"></div>
<div class="b" style="left:1490.7px;top:387.2px;width:9.3px;height:10.7px;background:#f68d0c"></div>
<div class="b" style="left:1490.7px;top:399.2px;width:9.3px;height:13.6px;background:#db2f1f"></div>
<div class="b" style="left:1514.2px;top:356.7px;width:9.3px;height:29.2px;background:#1a73e8;border-radius:4px 4px 0 0"></div>
<div class="b" style="left:1514.2px;top:387.2px;width:9.3px;height:10.7px;background:#f68d0c"></div>
<div class="b" style="left:1514.2px;top:399.2px;width:9.3px;height:13.6px;background:#db2f1f"></div>
<div class="b" style="left:1532.8px;top:370.8px;width:9.3px;height:15.0px;background:#1a73e8;border-radius:4px 4px 0 0"></div>
<div class="b" style="left:1532.8px;top:387.2px;width:9.3px;height:10.7px;background:#f68d0c"></div>
<div class="b" style="left:1532.8px;top:399.2px;width:9.3px;height:13.6px;background:#db2f1f"></div>
<div class="b" style="left:1551.7px;top:375.5px;width:9.3px;height:10.3px;background:#1a73e8;border-radius:4px 4px 0 0"></div>
<div class="b" style="left:1551.7px;top:387.2px;width:9.3px;height:10.7px;background:#f68d0c"></div>
<div class="b" style="left:1551.7px;top:399.2px;width:9.3px;height:13.6px;background:#db2f1f"></div>
<div class="b" style="left:1570.3px;top:359.2px;width:9.3px;height:17.5px;background:#1a73e8;border-radius:4px 4px 0 0"></div>
<div class="b" style="left:1570.3px;top:378.3px;width:9.3px;height:16.3px;background:#f68d0c"></div>
<div class="b" style="left:1570.3px;top:396.3px;width:9.3px;height:16.5px;background:#db2f1f"></div>
<div class="b" style="left:1589.2px;top:358.0px;width:9.3px;height:28.5px;background:#1a73e8;border-radius:4px 4px 0 0"></div>
<div class="b" style="left:1589.2px;top:386.5px;width:9.3px;height:12.0px;background:#f68d0c"></div>
<div class="b" style="left:1589.2px;top:398.5px;width:9.3px;height:14.3px;background:#db2f1f"></div>
<div class="b" style="left:1608.0px;top:375.5px;width:9.3px;height:10.3px;background:#1a73e8;border-radius:4px 4px 0 0"></div>
<div class="b" style="left:1608.0px;top:387.2px;width:9.3px;height:10.7px;background:#f68d0c"></div>
<div class="b" style="left:1608.0px;top:399.2px;width:9.3px;height:13.6px;background:#db2f1f"></div>
<div class="b" style="left:1626.7px;top:375.5px;width:9.3px;height:10.3px;background:#1a73e8;border-radius:4px 4px 0 0"></div>
<div class="b" style="left:1626.7px;top:387.2px;width:9.3px;height:10.7px;background:#f68d0c"></div>
<div class="b" style="left:1626.7px;top:399.2px;width:9.3px;height:13.6px;background:#db2f1f"></div>
<div class="b" style="left:1645.3px;top:363.8px;width:9.3px;height:22.0px;background:#1a73e8;border-radius:4px 4px 0 0"></div>
<div class="b" style="left:1645.3px;top:387.2px;width:9.3px;height:10.7px;background:#f68d0c"></div>
<div class="b" style="left:1645.3px;top:399.2px;width:9.3px;height:13.6px;background:#db2f1f"></div>
<div class="b" style="left:1664.2px;top:356.7px;width:9.3px;height:29.2px;background:#1a73e8;border-radius:4px 4px 0 0"></div>
<div class="b" style="left:1664.2px;top:387.2px;width:9.3px;height:10.7px;background:#f68d0c"></div>
<div class="b" style="left:1664.2px;top:399.2px;width:9.3px;height:13.6px;background:#db2f1f"></div>
<div class="t" style="left:534px;top:431.35px;font-size:11.7px;color:#4d5059;">JAN 1</div>
<div class="t" style="left:835px;top:431.35px;font-size:11.7px;color:#4d5059;">JAN 8</div>
<div class="t" style="left:1137.5px;top:431.35px;font-size:11.7px;color:#4d5059;">JAN 15</div>
<div class="t" style="left:1445px;top:431.35px;font-size:11.7px;color:#4d5059;">JAN 21</div>
<div class="card" style="left:471.500px;top:475px;width:1300px;height:193px"></div>
<div class="b" style="left:485px;top:489px;width:22px;height:22px;border-radius:50%;background:#fff;box-shadow:0 0 0 1px #f2f2f5,0 1px 4px rgba(40,40,80,.13)"></div>
<div class="b" style="left:491.5px;top:499px;width:9px;height:2px;background:#92949b;border-radius:1px;"></div>
<div class="t" style="left:517.8px;top:494.85px;font-size:11.5px;color:#62656c;font-weight:bold;letter-spacing:0.25px;">ANOMALIES</div>
<svg class="ico" style="left:595.8px;top:494px;stroke:#6b6e76;stroke-width:1.100" width="12" height="12" viewBox="0 0 12 12"><circle cx="6" cy="6" r="5.200"/><path d="M6 5.400 V8.700 M6 3.300 V3.400"/></svg>
<div class="b" style="left:620.7px;top:488.5px;width:110px;height:23px;background:#e8effc;border-radius:3px;"></div>
<div class="t" style="left:628.2px;top:494.67px;font-size:12.45px;color:#3c3f48;">4 recent anomaly</div>
<div class="t" style="left:1653px;top:493.25px;font-size:14.5px;color:#3c3f48;">+2</div>
<div class="b" style="left:485.5px;top:526.3px;width:315.400px;height:128.200px;border:1px solid #f0f0f3;border-radius:4px;background:#fff"></div>
<div class="b" style="left:493.8px;top:535.6px;width:112.5px;height:22.6px;background:#e8effc;border-radius:3px;"></div>
<div class="t" style="left:501.6px;top:541.60px;font-size:12.2px;color:#4a88da;">Service : example</div>
<div class="t" style="left:729.3px;top:541.60px;font-size:12.2px;color:#3c3f48;">2 days ago</div>
<div class="t" style="left:466.0px;width:60.300px;text-align:right;top:577.0px;font-size:12.600px;color:#4d5059">200K</div>
<div class="t" style="left:466.0px;width:60.300px;text-align:right;top:608.1px;font-size:12.600px;color:#4d5059">0</div>
<div class="b" style="left:531.0px;top:581.3px;width:261px;height:1px;background:#efeff2;"></div>
<div class="b" style="left:531.0px;top:611.8px;width:261px;height:1px;background:#efeff2;"></div>
<div class="b" style="left:632.2px;top:580.700px;width:42.200px;height:31.600px;background:#fde5e3;border:1px dashed #ea7c73;border-bottom:none"></div>
<div class="b" style="left:634.9000000000001px;top:591.6px;width:8.9px;height:20.7px;background:#db2f1f;"></div>
<div class="b" style="left:648.9000000000001px;top:594.9px;width:8.9px;height:17.4px;background:#db2f1f;"></div>
<div class="b" style="left:663.0px;top:585.6px;width:8.9px;height:26.7px;background:#db2f1f;"></div>
<div class="t" style="left:584.4px;top:626.27px;font-size:12.05px;color:#4d5059;">12:00</div>
<div class="t" style="left:721.6px;top:626.27px;font-size:12.05px;color:#4d5059;">18:00</div>
<div class="b" style="left:816.1px;top:526.3px;width:315.400px;height:128.200px;border:1px solid #f0f0f3;border-radius:4px;background:#fff"></div>
<div class="b" style="left:824.4000000000001px;top:535.6px;width:112.5px;height:22.6px;background:#e8effc;border-radius:3px;"></div>
<div class="t" style="left:832.2px;top:541.60px;font-size:12.2px;color:#4a88da;">Service : example</div>
<div class="t" style="left:1059.9px;top:541.60px;font-size:12.2px;color:#3c3f48;">2 days ago</div>
<div class="t" style="left:796.6px;width:60.300px;text-align:right;top:577.0px;font-size:12.600px;color:#4d5059">200K</div>
<div class="t" style="left:796.6px;width:60.300px;text-align:right;top:608.1px;font-size:12.600px;color:#4d5059">0</div>
<div class="b" style="left:861.6px;top:581.3px;width:261px;height:1px;background:#efeff2;"></div>
<div class="b" style="left:861.6px;top:611.8px;width:261px;height:1px;background:#efeff2;"></div>
<div class="b" style="left:906.8000000000001px;top:580.700px;width:42.200px;height:31.600px;background:#fde5e3;border:1px dashed #ea7c73;border-bottom:none"></div>
<div class="b" style="left:909.5000000000001px;top:591.6px;width:8.9px;height:20.7px;background:#db2f1f;"></div>
<div class="b" style="left:923.5000000000001px;top:594.9px;width:8.9px;height:17.4px;background:#db2f1f;"></div>
<div class="b" style="left:937.6px;top:585.6px;width:8.9px;height:26.7px;background:#db2f1f;"></div>
<div class="t" style="left:915.0px;top:626.27px;font-size:12.05px;color:#4d5059;">12:00</div>
<div class="t" style="left:1052.2px;top:626.27px;font-size:12.05px;color:#4d5059;">18:00</div>
<div class="b" style="left:1146.7px;top:526.3px;width:315.400px;height:128.200px;border:1px solid #f0f0f3;border-radius:4px;background:#fff"></div>
<div class="b" style="left:1155.0px;top:535.6px;width:112.5px;height:22.6px;background:#e8effc;border-radius:3px;"></div>
<div class="t" style="left:1162.8000000000002px;top:541.60px;font-size:12.2px;color:#4a88da;">Service : example</div>
<div class="t" style="left:1390.5px;top:541.60px;font-size:12.2px;color:#3c3f48;">2 days ago</div>
<div class="t" style="left:1127.2px;width:60.300px;text-align:right;top:577.0px;font-size:12.600px;color:#4d5059">200K</div>
<div class="t" style="left:1127.2px;width:60.300px;text-align:right;top:608.1px;font-size:12.600px;color:#4d5059">0</div>
<div class="b" style="left:1192.2px;top:581.3px;width:261px;height:1px;background:#efeff2;"></div>
<div class="b" style="left:1192.2px;top:611.8px;width:261px;height:1px;background:#efeff2;"></div>
<div class="b" style="left:1237.4px;top:580.700px;width:42.200px;height:31.600px;background:#fde5e3;border:1px dashed #ea7c73;border-bottom:none"></div>
<div class="b" style="left:1240.1000000000001px;top:591.6px;width:8.9px;height:20.7px;background:#db2f1f;"></div>
<div class="b" style="left:1254.1000000000001px;top:594.9px;width:8.9px;height:17.4px;background:#db2f1f;"></div>
<div class="b" style="left:1268.2px;top:585.6px;width:8.9px;height:26.7px;background:#db2f1f;"></div>
<div class="t" style="left:1245.6px;top:626.27px;font-size:12.05px;color:#4d5059;">12:00</div>
<div class="t" style="left:1382.8000000000002px;top:626.27px;font-size:12.05px;color:#4d5059;">18:00</div>
<div class="b" style="left:1477.3000000000002px;top:526.3px;width:315.400px;height:128.200px;border:1px solid #f0f0f3;border-radius:4px;background:#fff"></div>
<div class="b" style="left:1485.6000000000001px;top:535.6px;width:112.5px;height:22.6px;background:#e8effc;border-radius:3px;"></div>
<div class="t" style="left:1493.4px;top:541.60px;font-size:12.2px;color:#4a88da;">Service : example</div>
<div class="t" style="left:1721.1px;top:541.60px;font-size:12.2px;color:#3c3f48;">2 days ago</div>
<div class="t" style="left:1457.8000000000002px;width:60.300px;text-align:right;top:577.0px;font-size:12.600px;color:#4d5059">200K</div>
<div class="t" style="left:1457.8000000000002px;width:60.300px;text-align:right;top:608.1px;font-size:12.600px;color:#4d5059">0</div>
<div class="b" style="left:1522.8000000000002px;top:581.3px;width:261px;height:1px;background:#efeff2;"></div>
<div class="b" style="left:1522.8000000000002px;top:611.8px;width:261px;height:1px;background:#efeff2;"></div>
<div class="b" style="left:1568.0px;top:580.700px;width:42.200px;height:31.600px;background:#fde5e3;border:1px dashed #ea7c73;border-bottom:none"></div>
<div class="b" style="left:1570.7px;top:591.6px;width:8.9px;height:20.7px;background:#db2f1f;"></div>
<div class="b" style="left:1584.7px;top:594.9px;width:8.9px;height:17.4px;background:#db2f1f;"></div>
<div class="b" style="left:1598.8px;top:585.6px;width:8.9px;height:26.7px;background:#db2f1f;"></div>
<div class="t" style="left:1576.2px;top:626.27px;font-size:12.05px;color:#4d5059;">12:00</div>
<div class="t" style="left:1713.4px;top:626.27px;font-size:12.05px;color:#4d5059;">18:00</div>
<div class="card" style="left:471.500px;top:683px;width:1300px;height:500px"></div>
<div class="t" style="letter-spacing:0.17px;left:485.7px;top:703.95px;font-size:14.500px;color:#7b7e87">Total <span style="color:#45484f">9.2M</span></div>
<div class="b" style="left:568.8px;top:701.5px;width:2.2px;height:18.5px;background:#d93025;"></div>
<div class="t" style="letter-spacing:-0.15px;left:580.7px;top:703.95px;font-size:14.500px;color:#7b7e87">Error <span style="color:#45484f">18.6K</span></div>
<div class="b" style="left:667.0999999999999px;top:701.5px;width:2.2px;height:18.5px;background:#5a57c9;"></div>
<div class="t" style="letter-spacing:-0.07px;left:679px;top:703.95px;font-size:14.500px;color:#7b7e87">Info <span style="color:#45484f">18.6K</span></div>
<div class="b" style="left:758.8px;top:701.5px;width:2.2px;height:18.5px;background:#1e9d57;"></div>
<div class="t" style="letter-spacing:0px;left:770.7px;top:703.95px;font-size:14.500px;color:#7b7e87">Notice <span style="color:#45484f">1.6K</span></div>
<div class="b" style="left:859.5px;top:701.5px;width:2.2px;height:18.5px;background:#2f7de1;"></div>
<div class="t" style="letter-spacing:-0.2px;left:871.7px;top:703.95px;font-size:14.500px;color:#7b7e87">Info <span style="color:#45484f">1.6K</span></div>
<div class="b" style="left:942.8px;top:701.5px;width:2.2px;height:18.5px;background:#f29a1f;"></div>
<div class="t" style="letter-spacing:-0.33px;left:955px;top:703.95px;font-size:14.500px;color:#7b7e87">Warn <span style="color:#45484f">1.6K</span></div>
<div class="b" style="left:471px;top:740px;width:1300px;height:37.3px;background:#f5f6fa;"></div>
<div class="t" style="left:485px;top:752.90px;font-size:12.2px;color:#3c3f48;font-weight:bold;">Date</div>
<div class="t" style="left:669px;top:752.90px;font-size:12.2px;color:#3c3f48;font-weight:bold;letter-spacing:-0.1px;">Message</div>
<svg class="" style="left:636px;top:752px;" width="8" height="14" viewBox="0 0 8 14"><path d="M4 1.200 L7 5.600 H1 Z" fill="#c9cad0" stroke="none"/><path d="M4 12.800 L7 8.400 H1 Z" fill="#dcdde2" stroke="none"/></svg>
<div class="b" style="left:471px;top:814.8000000000001px;width:1300px;height:1px;background:#f0f0f3;"></div>
<div class="b" style="left:483.3px;top:786.2px;width:2.6px;height:21px;background:#5a57c9;border-radius:1px;"></div>
<div class="t" style="left:494.3px;top:790.60px;font-size:13.6px;color:#3c3f48;letter-spacing:-0.14px;">13 May 14:05:52:12</div>
<div class="b" style="left:675.8px;top:796.5px;width:9px;height:1.1px;background:#6d6bd0;"></div>
<div class="b" style="left:679.75px;top:792.5500000000001px;width:1.1px;height:9px;background:#6d6bd0;"></div>
<div class="t mono" style="left:702.3px;top:792.96px;font-size:12.888px;color:#474a52;">[0m [91mERROR[0m [37merror getting resource[0m [96m{&quot;time&quot;:&quot;2024-04-11T11:34:47.524185561Z&quot;,&quot;level&quot;:&quot;ERROR&quot;,&quot;source&quot;:{&quot;function&quot;:&quot;main.getResource&quot;}}</div>
<div class="b" style="left:471px;top:852.3000000000001px;width:1300px;height:1px;background:#f0f0f3;"></div>
<div class="b" style="left:483.3px;top:821.7px;width:2.6px;height:25px;background:#d93025;border-radius:1px;"></div>
<div class="t" style="left:494.3px;top:828.10px;font-size:13.6px;color:#3c3f48;letter-spacing:-0.14px;">13 May 14:04:00:12</div>
<div class="b" style="left:675.8px;top:834.0px;width:9px;height:1.1px;background:#6d6bd0;"></div>
<div class="b" style="left:679.75px;top:830.0500000000001px;width:1.1px;height:9px;background:#6d6bd0;"></div>
<div class="t mono" style="left:702.3px;top:830.46px;font-size:12.888px;color:#474a52;">at /app/node_modules/@middleware.io/agent-apm-nextjs/node_modules/@opentelemetry/instrumentation-grpc/build/src/grpc-js/client</div>
<div class="b" style="left:471px;top:889.8000000000001px;width:1300px;height:1px;background:#f0f0f3;"></div>
<div class="b" style="left:483.3px;top:861.2px;width:2.6px;height:21px;background:#d93025;border-radius:1px;"></div>
<div class="t" style="left:494.3px;top:865.60px;font-size:13.6px;color:#3c3f48;letter-spacing:-0.14px;">13 May 14:05:52:12</div>
<div class="b" style="left:675.8px;top:871.5px;width:9px;height:1.1px;background:#6d6bd0;"></div>
<div class="b" style="left:679.75px;top:867.5500000000001px;width:1.1px;height:9px;background:#6d6bd0;"></div>
<div class="t mono" style="left:702.3px;top:867.96px;font-size:12.888px;color:#474a52;">[0m [91mERROR[0m [37merror getting resource[0m [96m{&quot;time&quot;:&quot;2024-04-11T11:34:47.524185561Z&quot;,&quot;level&quot;:&quot;ERROR&quot;,&quot;source&quot;:{&quot;function&quot;:&quot;main.getResource&quot;}}</div>
<div class="b" style="left:471px;top:927.3000000000001px;width:1300px;height:1px;background:#f0f0f3;"></div>
<div class="b" style="left:483.3px;top:896.7px;width:2.6px;height:25px;background:#d93025;border-radius:1px;"></div>
<div class="t" style="left:494.3px;top:903.10px;font-size:13.6px;color:#3c3f48;letter-spacing:-0.14px;">13 May 14:04:00:12</div>
<div class="b" style="left:675.8px;top:909.0px;width:9px;height:1.1px;background:#6d6bd0;"></div>
<div class="b" style="left:679.75px;top:905.0500000000001px;width:1.1px;height:9px;background:#6d6bd0;"></div>
<div class="t mono" style="left:702.3px;top:905.46px;font-size:12.888px;color:#474a52;">at /app/node_modules/@middleware.io/agent-apm-nextjs/node_modules/@opentelemetry/instrumentation-grpc/build/src/grpc-js/client</div>
<div class="b" style="left:471px;top:964.8000000000001px;width:1300px;height:1px;background:#f0f0f3;"></div>
<div class="b" style="left:483.3px;top:934.2px;width:2.6px;height:25px;background:#f29a1f;border-radius:1px;"></div>
<div class="t" style="left:494.3px;top:940.60px;font-size:13.6px;color:#3c3f48;letter-spacing:-0.14px;">13 May 14:04:00:12</div>
<div class="b" style="left:675.8px;top:946.5px;width:9px;height:1.1px;background:#6d6bd0;"></div>
<div class="b" style="left:679.75px;top:942.5500000000001px;width:1.1px;height:9px;background:#6d6bd0;"></div>
<div class="t mono" style="left:702.3px;top:942.96px;font-size:12.888px;color:#474a52;">at /app/node_modules/@middleware.io/agent-apm-nextjs/node_modules/@opentelemetry/instrumentation-grpc/build/src/grpc-js/client</div>
<div class="b" style="left:471px;top:1002.3000000000001px;width:1300px;height:1px;background:#f0f0f3;"></div>
<div class="b" style="left:483.3px;top:971.7px;width:2.6px;height:25px;background:#f29a1f;border-radius:1px;"></div>
<div class="t" style="left:494.3px;top:978.10px;font-size:13.6px;color:#3c3f48;letter-spacing:-0.14px;">13 May 14:04:00:12</div>
<div class="b" style="left:675.8px;top:984.0px;width:9px;height:1.1px;background:#6d6bd0;"></div>
<div class="b" style="left:679.75px;top:980.0500000000001px;width:1.1px;height:9px;background:#6d6bd0;"></div>
<div class="t mono" style="left:702.3px;top:980.46px;font-size:12.888px;color:#474a52;">at /app/node_modules/@middleware.io/agent-apm-nextjs/node_modules/@opentelemetry/instrumentation-grpc/build/src/grpc-js/client</div>
<div class="b" style="left:471px;top:1039.8px;width:1300px;height:1px;background:#f0f0f3;"></div>
<div class="b" style="left:483.3px;top:1009.2px;width:2.6px;height:25px;background:#f29a1f;border-radius:1px;"></div>
<div class="t" style="left:494.3px;top:1015.60px;font-size:13.6px;color:#3c3f48;letter-spacing:-0.14px;">13 May 14:04:00:12</div>
<div class="b" style="left:675.8px;top:1021.5px;width:9px;height:1.1px;background:#6d6bd0;"></div>
<div class="b" style="left:679.75px;top:1017.5500000000001px;width:1.1px;height:9px;background:#6d6bd0;"></div>
<div class="t mono" style="left:702.3px;top:1017.96px;font-size:12.888px;color:#474a52;">at /app/node_modules/@middleware.io/agent-apm-nextjs/node_modules/@opentelemetry/instrumentation-grpc/build/src/grpc-js/client</div>
<div class="b" style="left:471px;top:1077.3px;width:1300px;height:1px;background:#f0f0f3;"></div>
<div class="b" style="left:483.3px;top:1046.7px;width:2.6px;height:25px;background:#5a57c9;border-radius:1px;"></div>
<div class="t" style="left:494.3px;top:1053.10px;font-size:13.6px;color:#3c3f48;letter-spacing:-0.14px;">13 May 14:04:00:12</div>
<div class="b" style="left:675.8px;top:1059.0px;width:9px;height:1.1px;background:#6d6bd0;"></div>
<div class="b" style="left:679.75px;top:1055.05px;width:1.1px;height:9px;background:#6d6bd0;"></div>
<div class="t mono" style="left:702.3px;top:1055.46px;font-size:12.888px;color:#474a52;">at /app/node_modules/@middleware.io/agent-apm-nextjs/node_modules/@opentelemetry/instrumentation-grpc/build/src/grpc-js/client</div>
<div class="b" style="left:471px;top:1114.8px;width:1300px;height:1px;background:#f0f0f3;"></div>
<div class="b" style="left:483.3px;top:1084.2px;width:2.6px;height:25px;background:#5a57c9;border-radius:1px;"></div>
<div class="t" style="left:494.3px;top:1090.60px;font-size:13.6px;color:#3c3f48;letter-spacing:-0.14px;">13 May 14:04:00:12</div>
<div class="b" style="left:675.8px;top:1096.5px;width:9px;height:1.1px;background:#6d6bd0;"></div>
<div class="b" style="left:679.75px;top:1092.55px;width:1.1px;height:9px;background:#6d6bd0;"></div>
<div class="t mono" style="left:702.3px;top:1092.96px;font-size:12.888px;color:#474a52;">at /app/node_modules/@middleware.io/agent-apm-nextjs/node_modules/@opentelemetry/instrumentation-grpc/build/src/grpc-js/client</div>
 </div></div>
</div>
</body>
</html>
